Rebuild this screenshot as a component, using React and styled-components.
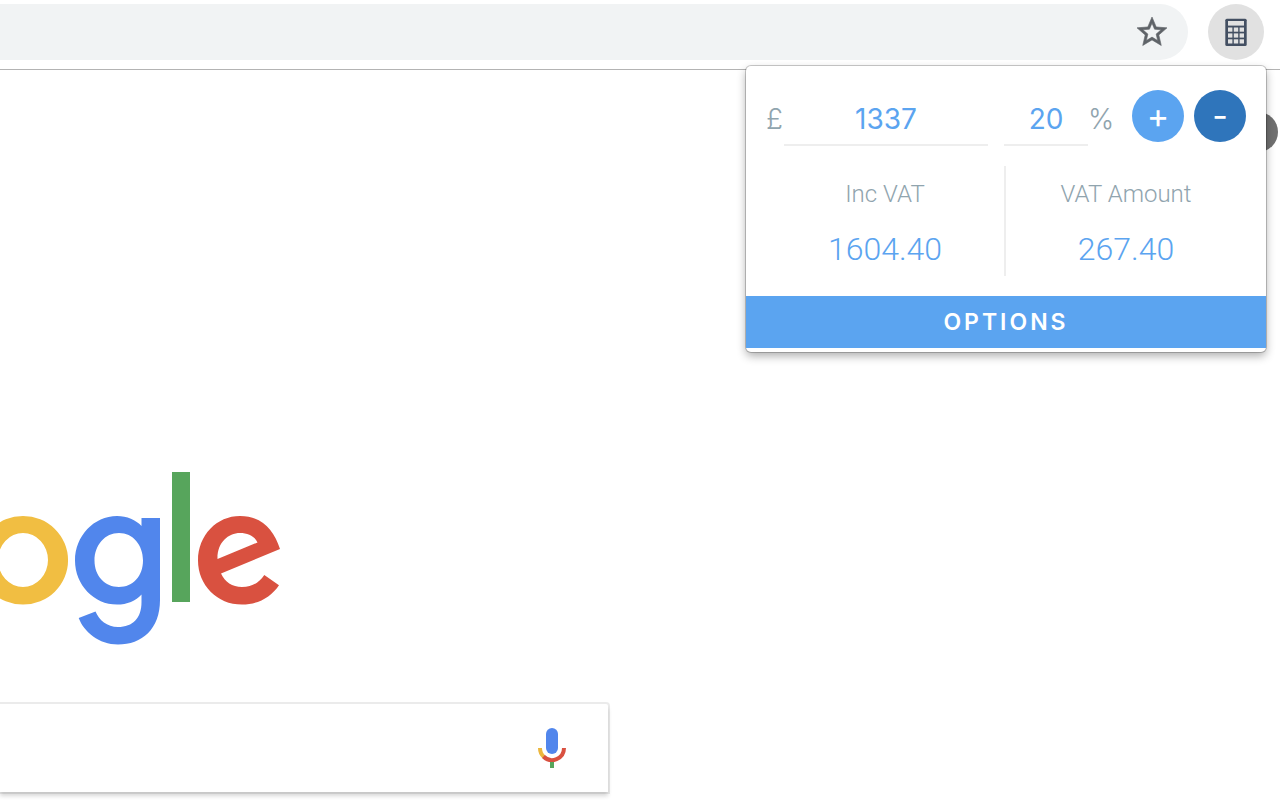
import React, { useState } from 'react'
import styled, { createGlobalStyle } from 'styled-components'
import { MdStarBorder } from 'react-icons/md'

const GlobalStyle = createGlobalStyle`
  * { box-sizing: border-box; }
  body {
    margin: 0;
    background: #fff;
    font-family: Roboto, 'Liberation Sans', sans-serif;
    overflow: hidden;
  }
  button, input { font: inherit; border: 0; padding: 0; }
  button { cursor: pointer; }
`

const Page = styled.div`
  position: relative;
  min-height: 100vh;
`

const Toolbar = styled.header`
  display: flex;
  align-items: center;
  gap: 20px;
  padding: 4px 16px 9px 0;
  border-bottom: 1px solid #b3b3b3;
`

const AddressBar = styled.div`
  flex: 1;
  display: flex;
  align-items: center;
  height: 56px;
  padding-right: 18px;
  background: #f1f3f4;
  border-radius: 0 28px 28px 0;
`

const AddressInput = styled.input`
  flex: 1;
  min-width: 0;
  background: none;
  outline: none;
`

const IconButton = styled.button`
  display: flex;
  background: none;
  color: #5f6368;
`

const StarIcon = styled(MdStarBorder)`
  /* the first path is only the icon's empty bounding square */
  path:first-child { stroke: none; }
  path:last-child { stroke: currentColor; stroke-width: 0.4; }
`

const ExtensionButton = styled.button`
  display: flex;
  align-items: center;
  justify-content: center;
  width: 56px;
  height: 56px;
  background: #e1e1e1;
  border-radius: 50%;
`

const AccountRow = styled.div`
  display: flex;
  justify-content: flex-end;
  padding: 42px 2px 0;
`

const Avatar = styled.button`
  width: 40px;
  height: 40px;
  border-radius: 50%;
  background: #707070;
`

const Search = styled.main`
  display: flex;
  flex-direction: column;
  align-items: flex-start;
  gap: 58px;
  padding-top: 318px;
`

const Logo = styled.svg`
  display: block;
`

const SearchBox = styled.form`
  display: flex;
  align-items: center;
  width: 100%;
  max-width: 608px;
  height: 88px;
  padding-right: 40px;
  background: #fff;
  border-radius: 0 2px 0 0;
  box-shadow: 0 4px 4px rgba(0, 0, 0, 0.16), 0 0 0 2px rgba(0, 0, 0, 0.08);
`

const Popup = styled.section`
  position: absolute;
  top: 66px;
  right: 14px;
  width: 520px;
  padding-bottom: 4px;
  background: #fff;
  border-radius: 5px;
  box-shadow: 0 0 0 1px rgba(0, 0, 0, 0.2), 0 4px 10px rgba(0, 0, 0, 0.32);
`

const Fields = styled.div`
  display: flex;
  align-items: flex-start;
  padding: 24px 20px 20px;
`

const Unit = styled.label`
  width: ${p => p.$width}px;
  height: 56px;
  color: #90a4ae;
  font-family: Inter, sans-serif;
  font-size: 28px;
  font-weight: 300;
  line-height: 58px;
`

const Field = styled.input`
  width: ${p => p.$width}px;
  height: 56px;
  margin-right: ${p => p.$gap || 0}px;
  padding-top: 3px;
  border-bottom: 2px solid #eee;
  background: none;
  color: #5ba4f0;
  font-family: Inter, sans-serif;
  font-size: 28px;
  text-align: center;
  outline: none;
`

const Actions = styled.div`
  display: flex;
  gap: 10px;
  margin-left: auto;
`

const RoundButton = styled.button`
  width: 52px;
  height: 52px;
  border-radius: 50%;
  background: ${p => (p.$active ? '#2f75bb' : '#5ba4f0')};
  color: #fff;
  font-family: Inter, sans-serif;
  font-size: 34px;
  font-weight: 400;
  line-height: 52px;
`

const Results = styled.dl`
  display: grid;
  grid-template-columns: 1fr 1fr;
  margin: 0 20px 20px;
`

const Result = styled.div`
  height: 110px;
  padding-top: 8px;
  text-align: center;

  &:first-child { border-right: 2px solid #eee; }
`

const Label = styled.dt`
  color: #90a4ae;
  font-size: 24px;
  font-weight: 300;
  line-height: 40px;
`

const Amount = styled.dd`
  margin: 15px 0 0;
  color: #5ba4f0;
  font-size: 32px;
  font-weight: 300;
  line-height: 40px;
`

const OptionsButton = styled.button`
  display: block;
  width: 100%;
  height: 52px;
  background: #5ba4f0;
  color: #fff;
  font-family: Inter, sans-serif;
  font-size: 23px;
  font-weight: 600;
  letter-spacing: 3px;
`

const CalculatorIcon = () => (
  <svg width="22" height="28" viewBox="0 0 22 28">
    <rect x="0.300" y="0.700" width="21.400" height="27.300" rx="1.500" fill="#434f62" />
    <rect x="3" y="3" width="16" height="4.600" fill="#e1e1e1" />
    {[9.5, 15.4, 21.3].map(y => [3, 8.8, 14.6].map(x => (
      <rect key={`${x}-${y}`} x={x} y={y} width="4.400" height="4.200" fill="#e1e1e1" />
    )))}
  </svg>
)

const MicIcon = () => (
  <svg width="32" height="44" viewBox="0 0 32 44">
    <rect x="10" y="2" width="12" height="26" rx="6" fill="#5186ec" />
    <path d="M4 22A12 12 0 0 0 8 31" fill="none" stroke="#ecb73e" strokeWidth="4" />
    <path d="M7.500 30.500A12 12 0 0 0 28 22" fill="none" stroke="#d95140" strokeWidth="4" />
    <rect x="14" y="36" width="4" height="6" fill="#57a55c" />
  </svg>
)

const GoogleLogo = () => (
  <Logo width="282" height="176" viewBox="0 470 282 176" role="img" aria-label="Google">
    <path fill="#f1be42" fillRule="evenodd" d="M23 516a45 44.300 0 1 0 0 88.600a45 44.300 0 1 0 0-88.600Zm0 17a25 27 0 1 1 0 54a25 27 0 1 1 0-54Z" />
    <path fill="#5186ec" fillRule="evenodd" d="M141.500 518H160V600C160 629 142 644.500 118 644.500C99 644.500 84 632 78.700 618L95.500 611.500C99 620 107 627 118 627C133 627 141.500 618 141.500 602V594.500C136 601 127 604.600 117 604.600C94 604.600 75 585 75 560.500C75 536 94 516 117 516C127 516 136 520 141.500 526ZM119 533C105 533 94.500 545 94.500 560.500C94.500 576 105 587 119 587C133 587 143 576 143 560.500C143 545 133 533 119 533Z" />
    <rect x="172" y="472" width="18" height="130" fill="#57a55c" />
    <path fill="#d95140" fillRule="evenodd" d="M264.300 575L279 585.200C271 597 258 604.600 242 604.600C217 604.600 198 585 198 560.500C198 535 217 516 240 516C262 516 274 530 280 549L221 573.500C225 582 232 587 242 587C252 587 259 583 264.300 575ZM217.500 559L257.500 542.500C255 536.500 248 533 240 533C228 533 217 543 217.500 559Z" />
  </Logo>
)

export default function App() {
  const [amount, setAmount] = useState('1337')
  const [rate, setRate] = useState('20')
  const [adding, setAdding] = useState(true)

  const factor = 1 + Number(rate) / 100
  const total = adding ? amount * factor : amount / factor

  return (
    <Page>
      <GlobalStyle />
      <Toolbar>
        <AddressBar>
          <AddressInput aria-label="Address" />
          <IconButton aria-label="Bookmark this page">
            <StarIcon size={36} />
          </IconButton>
        </AddressBar>
        <ExtensionButton aria-label="VAT calculator">
          <CalculatorIcon />
        </ExtensionButton>
      </Toolbar>

      <AccountRow>
        <Avatar aria-label="Account" />
      </AccountRow>

      <Search>
        <GoogleLogo />
        <SearchBox>
          <AddressInput aria-label="Search" />
          <IconButton type="button" aria-label="Search by voice">
            <MicIcon />
          </IconButton>
        </SearchBox>
      </Search>

      <Popup>
        <Fields>
          <Unit htmlFor="amount" $width={18}>£</Unit>
          <Field id="amount" $width={204} $gap={16} value={amount} onChange={e => setAmount(e.target.value)} />
          <Field id="rate" $width={84} value={rate} onChange={e => setRate(e.target.value)} />
          <Unit htmlFor="rate" $width={24}>%</Unit>
          <Actions>
            <RoundButton onClick={() => setAdding(true)}>+</RoundButton>
            <RoundButton $active onClick={() => setAdding(false)}>-</RoundButton>
          </Actions>
        </Fields>
        <Results>
          <Result>
            <Label>{adding ? 'Inc VAT' : 'Ex VAT'}</Label>
            <Amount>{total.toFixed(2)}</Amount>
          </Result>
          <Result>
            <Label>VAT Amount</Label>
            <Amount>{Math.abs(total - amount).toFixed(2)}</Amount>
          </Result>
        </Results>
        <OptionsButton>OPTIONS</OptionsButton>
      </Popup>
    </Page>
  )
}
